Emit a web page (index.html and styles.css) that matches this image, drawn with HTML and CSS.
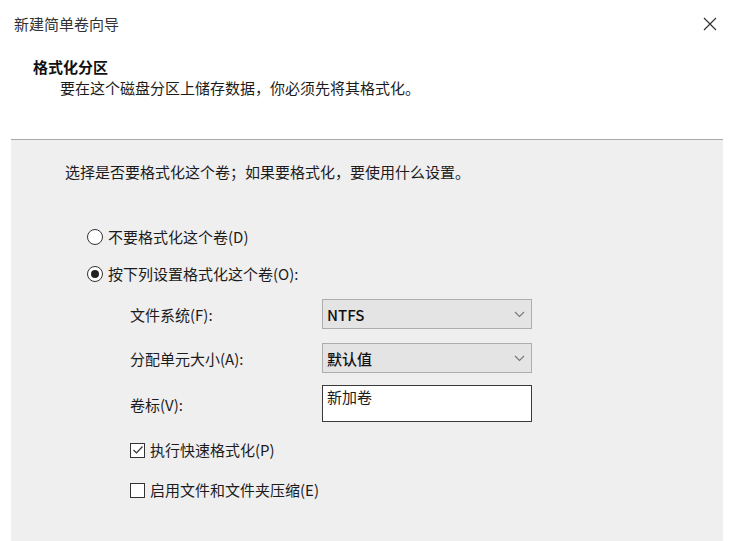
FILE: index.html
```html
<!DOCTYPE html>
<html lang="zh-CN">
<head>
<meta charset="utf-8">
<title>新建简单卷向导</title>
<link rel="stylesheet" href="styles.css">
</head>
<body>
<div class="dialog">
  <div class="titlebar">
    <span class="title">新建简单卷向导</span>
    <svg class="close" width="14" height="14" viewBox="0 0 14 14"><path d="M1 1L13 13M13 1L1 13" stroke="#333" stroke-width="1.2" fill="none"/></svg>
  </div>
  <div class="header">
    <div class="heading">格式化分区</div>
    <div class="subtitle">要在这个磁盘分区上储存数据，你必须先将其格式化。</div>
  </div>
  <div class="panel">
    <div class="instruction">选择是否要格式化这个卷；如果要格式化，要使用什么设置。</div>
    <div class="options">
      <div class="choice"><span class="radio"></span>不要格式化这个卷(D)</div>
      <div class="choice"><span class="radio checked"></span>按下列设置格式化这个卷(O):</div>
    </div>
    <div class="form">
      <div class="label">文件系统(F):</div>
      <div class="select"><span class="val strong">NTFS</span><svg width="11" height="7" viewBox="0 0 11 7"><path d="M1 1L5.5 5.5L10 1" stroke="#777" stroke-width="1.1" fill="none"/></svg></div>
      <div class="label">分配单元大小(A):</div>
      <div class="select"><span class="val strong">默认值</span><svg width="11" height="7" viewBox="0 0 11 7"><path d="M1 1L5.5 5.5L10 1" stroke="#777" stroke-width="1.1" fill="none"/></svg></div>
      <div class="label">卷标(V):</div>
      <div class="textbox">新加卷</div>
    </div>
    <div class="checks">
      <div class="choice"><span class="box"><svg width="12" height="12" viewBox="0 0 12 12"><path d="M1.5 6L4.5 9L10.5 2.5" stroke="#333" stroke-width="1.2" fill="none"/></svg></span>执行快速格式化(P)</div>
      <div class="choice"><span class="box"></span>启用文件和文件夹压缩(E)</div>
    </div>
  </div>
</div>
</body>
</html>
```

FILE: styles.css
```css
html, body {
  margin: 0;
  padding: 0;
  background: #ffffff;
}
body {
  font-family: "Noto Sans CJK SC", "Noto Sans", sans-serif;
  font-size: 15px;
  color: #1c1c1c;
}
.dialog {
  width: 736px;
  height: 541px;
  display: flex;
  flex-direction: column;
  overflow: hidden;
}
.titlebar {
  height: 48px;
  display: flex;
  align-items: center;
  justify-content: space-between;
  padding: 0 19px 0 14px;
  color: #333;
}
.title {
  line-height: 20px;
}
.header {
  padding: 9px 0 41px 33px;
  line-height: 20px;
}
.heading {
  font-weight: bold;
  color: #111;
}
.subtitle {
  margin-left: 27px;
  margin-top: 1px;
}
.panel {
  flex: 1;
  margin: 0 13px 0 11px;
  background: #f0eff0;
  border-top: 1px solid #a8a8a8;
  padding: 22px 0 0 54px;
}
.instruction {
  line-height: 20px;
}
.options {
  margin: 45px 0 0 22px;
  display: flex;
  flex-direction: column;
  gap: 17px;
}
.choice {
  display: flex;
  align-items: center;
  line-height: 20px;
}
.radio {
  width: 14px;
  height: 14px;
  border: 1px solid #333;
  border-radius: 50%;
  margin-right: 5px;
  display: inline-flex;
  align-items: center;
  justify-content: center;
  background: #fff;
}
.radio.checked::after {
  content: "";
  width: 8px;
  height: 8px;
  border-radius: 50%;
  background: #222;
}
.form {
  margin: 15px 0 0 65px;
  display: grid;
  grid-template-columns: 192px 210px;
  row-gap: 14px;
  align-items: center;
}
.select {
  height: 30px;
  box-sizing: border-box;
  background: #e4e4e4;
  border: 1px solid #adadad;
  display: flex;
  align-items: center;
  justify-content: space-between;
  padding: 0 6px 0 4px;
}
.val.strong {
  font-weight: 500;
  color: #111;
}
.textbox {
  height: 37px;
  box-sizing: border-box;
  background: #fff;
  border: 1px solid #3a3a3a;
  padding: 1px 4px 0;
  line-height: 20px;
  margin-top: -2px;
}
.checks {
  margin: 18px 0 0 65px;
  display: flex;
  flex-direction: column;
  gap: 20px;
}
.box {
  width: 13px;
  height: 13px;
  border: 1px solid #333;
  background: #fff;
  margin-right: 5px;
  display: inline-flex;
  align-items: center;
  justify-content: center;
}
```
